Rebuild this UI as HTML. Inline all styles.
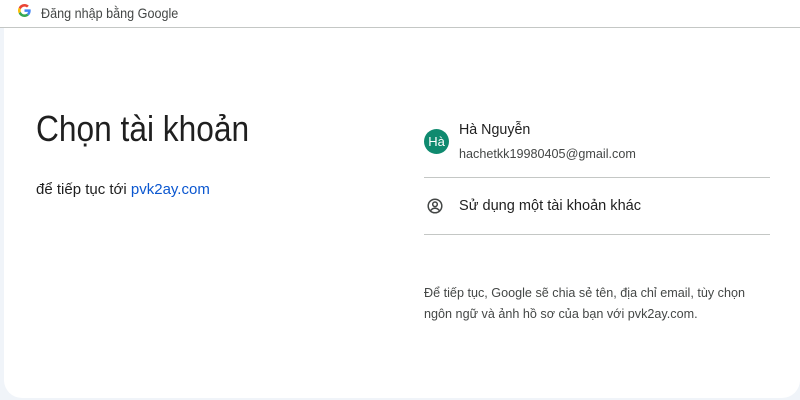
<!DOCTYPE html>
<html><head><meta charset="utf-8"><style>
body{margin:0;width:800px;height:400px;background:#f0f4f9;font-family:"Liberation Sans",Arial,sans-serif;position:relative;overflow:hidden;color:#1f1f1f}
.top{position:absolute;left:0;top:0;width:800px;height:27px;background:#fff;border-bottom:1px solid #c4c7c5}
.top .t{position:absolute;left:41px;top:5px;font-size:14px;color:#444746;transform:scaleX(0.9);transform-origin:left}
.card{position:absolute;left:4px;top:28px;width:796px;height:370px;background:#fff;border-radius:0 0 18px 18px}
.abs{position:absolute;white-space:nowrap}
</style></head><body>
<div class="top">
<svg class="abs" style="left:18px;top:4px" width="13" height="13" viewBox="0 0 48 48"><path fill="#EA4335" d="M24 9.5c3.5 0 6.6 1.2 9.1 3.6l6.8-6.8C35.8 2.4 30.3 0 24 0 14.6 0 6.6 5.4 2.6 13.3l7.9 6.2C12.4 13.7 17.7 9.5 24 9.5z"/><path fill="#4285F4" d="M46.9 24.5c0-1.6-.1-3.1-.4-4.5H24v9h12.9c-.6 3-2.3 5.5-4.8 7.2l7.7 6c4.5-4.200 7.1-10.3 7.1-17.7z"/><path fill="#FBBC05" d="M10.5 28.6c-.5-1.4-.8-3-.8-4.6s.3-3.2.8-4.6l-7.9-6.2C.9 16.5 0 20.1 0 24s.9 7.5 2.6 10.8l7.9-6.2z"/><path fill="#34A853" d="M24 48c6.5 0 11.9-2.1 15.9-5.8l-7.7-6c-2.2 1.5-5 2.300-8.2 2.3-6.3 0-11.6-4.2-13.5-10l-7.9 6.2C6.6 42.6 14.6 48 24 48z"/></svg>
<div class="t">Đăng nhập bằng Google</div>
</div>
<div class="card"></div>
<div class="abs" style="left:36px;top:108px;font-size:36px;color:#1f1f1f;transform:scaleX(0.88);transform-origin:left">Chọn tài khoản</div>
<div class="abs" style="left:36px;top:181px;font-size:15px;color:#1f1f1f">để tiếp tục tới <span style="color:#0b57d0">pvk2ay.com</span></div>
<div class="abs" style="left:424px;top:129px;width:25px;height:25px;border-radius:50%;background:#0f8a6f;color:#fff;font-size:13px;line-height:25px;text-align:center">Hà</div>
<div class="abs" style="left:459px;top:121px;font-size:15px;transform:scaleX(0.95);transform-origin:left">Hà Nguyễn</div>
<div class="abs" style="left:459px;top:146px;font-size:13px;color:#444746;transform:scaleX(0.97);transform-origin:left">hachetkk19980405@gmail.com</div>
<div class="abs" style="left:424px;top:177px;width:346px;height:1px;background:#c4c7c5"></div>
<svg class="abs" style="left:427px;top:198px" width="16" height="16" viewBox="0 0 16 16" fill="none" stroke="#444746" stroke-width="1.5"><circle cx="8" cy="8" r="6.8"/><circle cx="8" cy="6.3" r="2.3"/><path d="M3.6 12.6c1.2-1.6 2.7-2.3 4.4-2.3s3.2.7 4.4 2.3"/></svg>
<div class="abs" style="left:459px;top:197px;font-size:15px;transform:scaleX(0.97);transform-origin:left">Sử dụng một tài khoản khác</div>
<div class="abs" style="left:424px;top:234px;width:346px;height:1px;background:#c4c7c5"></div>
<div class="abs" style="left:424px;top:282px;font-size:13px;line-height:21px;color:#444746;transform:scaleX(0.97);transform-origin:left">Để tiếp tục, Google sẽ chia sẻ tên, địa chỉ email, tùy chọn<br>ngôn ngữ và ảnh hồ sơ của bạn với pvk2ay.com.</div>
</body></html>
